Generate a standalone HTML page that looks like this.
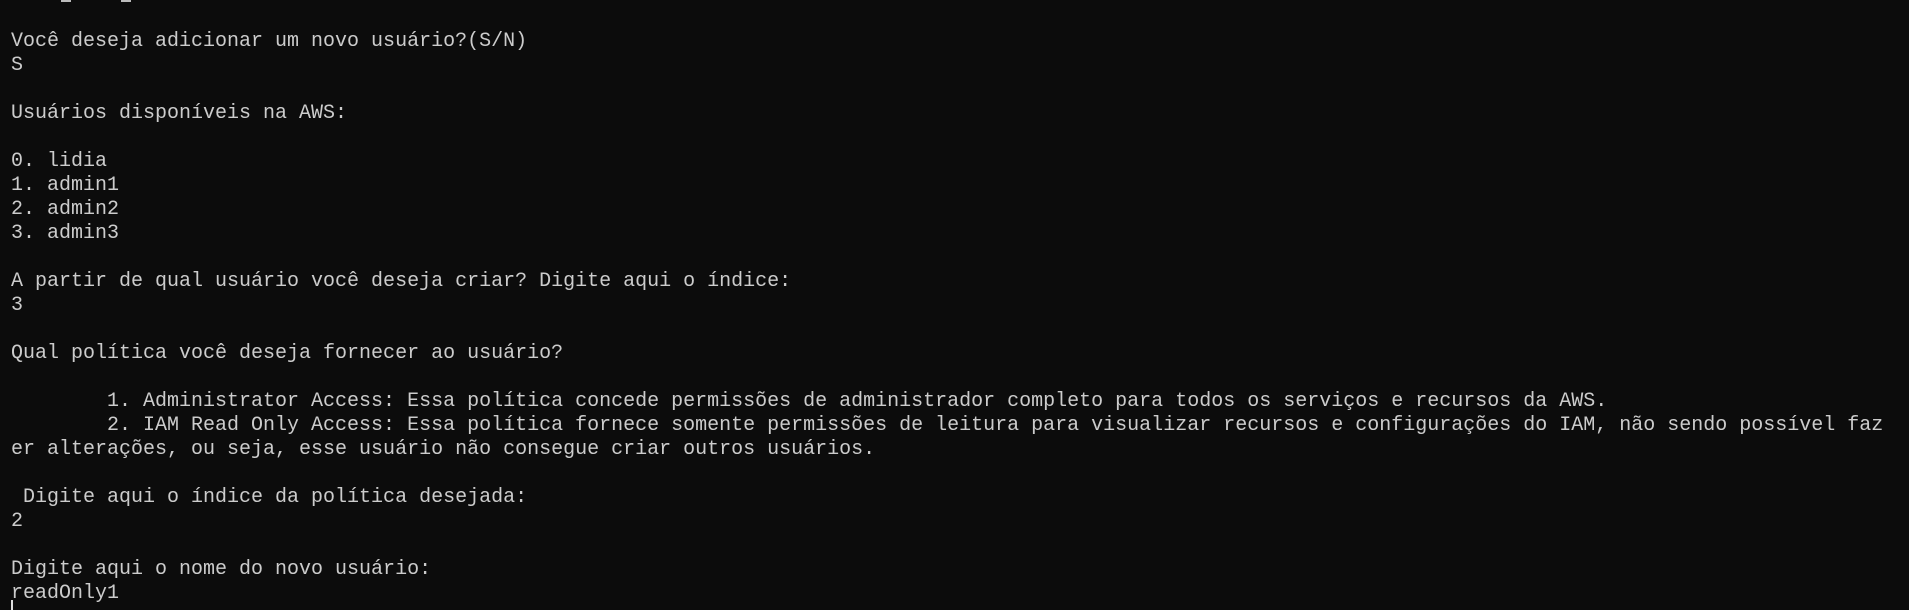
<!DOCTYPE html>
<html><head><meta charset="utf-8"><style>
html,body{margin:0;padding:0;background:#0c0c0c;width:1909px;height:610px;overflow:hidden}
pre{position:absolute;left:11px;top:30px;margin:0;font-family:"Liberation Mono",monospace;font-size:20px;line-height:24px;color:#cccccc;white-space:pre}
.u{position:absolute;top:0;height:2px;background:#bbb}
.cur{position:absolute;left:11px;top:600px;width:2px;height:10px;background:#ddd}
</style></head><body>
<div class="u" style="left:61px;width:10px"></div>
<div class="u" style="left:121px;width:10px"></div>
<pre>Você deseja adicionar um novo usuário?(S/N)
S

Usuários disponíveis na AWS:

0. lidia
1. admin1
2. admin2
3. admin3

A partir de qual usuário você deseja criar? Digite aqui o índice:
3

Qual política você deseja fornecer ao usuário?

        1. Administrator Access: Essa política concede permissões de administrador completo para todos os serviços e recursos da AWS.
        2. IAM Read Only Access: Essa política fornece somente permissões de leitura para visualizar recursos e configurações do IAM, não sendo possível faz
er alterações, ou seja, esse usuário não consegue criar outros usuários.

 Digite aqui o índice da política desejada:
2

Digite aqui o nome do novo usuário:
readOnly1</pre>
<div class="cur"></div>
</body></html>
